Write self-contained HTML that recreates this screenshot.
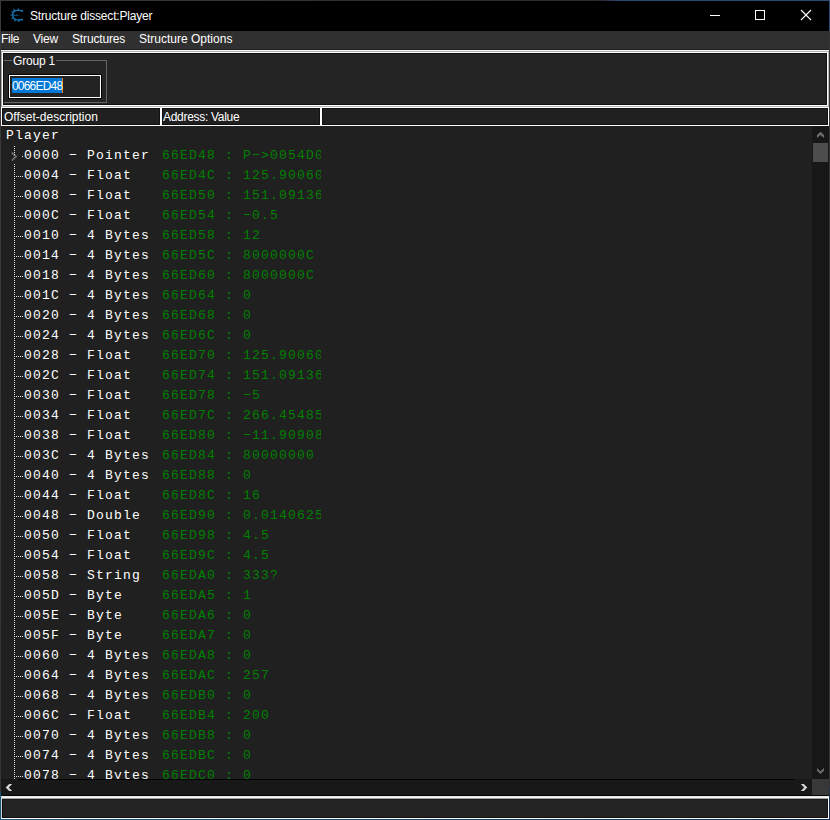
<!DOCTYPE html>
<html><head><meta charset="utf-8">
<style>
html,body{margin:0;padding:0;}
body{width:830px;height:820px;overflow:hidden;position:relative;background:#202020;font-family:"Liberation Sans",sans-serif;}
div{position:absolute;box-sizing:border-box;}
.t{color:#fff;font-size:12px;white-space:nowrap;line-height:14px;}
.r{left:0;height:20px;width:811px;font-family:"Liberation Mono",monospace;font-size:13px;letter-spacing:1.2px;line-height:20px;white-space:nowrap;}
.r .d{position:absolute;left:24px;top:0;color:#fff;}
.r .v{position:absolute;left:162px;top:0;color:#008000;width:159px;overflow:hidden;}
.vdot{width:1px;background:repeating-linear-gradient(to bottom,#e0e0e0 0 1px,transparent 1px 2px);}
.hdot{height:1px;background:repeating-linear-gradient(to right,#e0e0e0 0 1px,transparent 1px 2px);}
</style></head><body>
<!-- window border -->
<div style="left:0;top:0;width:830px;height:1px;background:linear-gradient(to right,#3a3a3a 0,#2a2a30 600px,#2c4a78 620px,#2c4a78 100%)"></div>
<div style="left:0;top:0;width:1px;height:820px;background:linear-gradient(to bottom,#3a3a3a 0,#363636 790px,#1a5a78 795px,#1a5a78 100%)"></div>
<div style="left:829px;top:0;width:1px;height:820px;background:linear-gradient(to bottom,#2c4a78 0,#2c4a78 30px,#363636 31px,#363636 780px,#10305a 800px)"></div>
<div style="left:0;top:819px;width:830px;height:1px;background:linear-gradient(to right,#1a5a78,#0c2c58)"></div>
<!-- title bar -->
<div style="left:1px;top:1px;width:828px;height:30px;background:#000"></div>
<svg style="position:absolute;left:6px;top:4px" width="24" height="24" viewBox="6 4 24 24">
  <path d="M22.5 11.2 Q19 9.8 15.5 10.6 Q12.6 12 12.6 15 Q12.8 18.2 15.5 19.6 Q19 20.6 22.5 19.2" fill="none" stroke="#1774ae" stroke-width="1.3"/>
  <path d="M10.3 15.2 H18.5" stroke="#1670a8" stroke-width="0.9"/>
  <path d="M13.6 8 L15.6 10.8 L13.6 11.4 Z M18.3 7.8 L19.6 10.6 L17.2 10.6 Z M22.6 9.2 L22.8 12.2 L20.6 11.2 Z M10.6 11.2 L13.4 11.6 L12.8 13 Z M10.6 18.8 L13 17.2 L13.6 18.8 Z M14.6 22 L14.6 19 L16.4 19.8 Z M18.8 22.2 L17.6 20.4 L20.2 20.4 Z M23.2 21.2 L20.8 19.6 L22.6 18.8 Z" fill="#1774ae"/>
</svg>
<div class="t" style="left:30px;top:9px;letter-spacing:-0.18px">Structure dissect:Player</div>
<div style="left:710px;top:15px;width:10px;height:1px;background:#fff"></div>
<div style="left:755px;top:10px;width:10px;height:10px;border:1px solid #fff"></div>
<svg style="position:absolute;left:800px;top:9px" width="12" height="12" viewBox="0 0 12 12">
  <path d="M1 1 L11 11 M11 1 L1 11" stroke="#fff" stroke-width="1.1"/>
</svg>
<!-- menu -->
<div style="left:1px;top:31px;width:828px;height:18px;background:#303030"></div>
<div class="t" style="left:1px;top:32px;letter-spacing:-0.3px">File</div>
<div class="t" style="left:33px;top:32px;letter-spacing:-0.2px">View</div>
<div class="t" style="left:72px;top:32px;letter-spacing:-0.15px">Structures</div>
<div class="t" style="left:139px;top:32px;">Structure Options</div>
<div style="left:1px;top:49px;width:828px;height:1px;background:#1f1f1f"></div>
<!-- upper panel -->
<div style="left:1px;top:50px;width:828px;height:57px;background:#242424"></div>
<div style="left:1px;top:50px;width:828px;height:1px;background:#f0f0f0"></div>
<div style="left:1px;top:51px;width:828px;height:1px;background:#b4b4b8"></div>
<div style="left:1px;top:51px;width:1px;height:56px;background:#a8a8ae"></div>
<div style="left:828px;top:51px;width:1px;height:56px;background:#b4b4b8"></div>
<div style="left:1px;top:106px;width:828px;height:1px;background:#b4b4b8"></div>
<div style="left:2px;top:52px;width:826px;height:54px;border:1px solid #fff"></div>
<div style="left:3px;top:53px;width:824px;height:52px;border:1px solid #111"></div>
<!-- group box -->
<div style="left:3px;top:60px;width:104px;height:43px;border:1px solid #646464;border-left-color:#111"></div>
<div style="left:12px;top:56px;width:44px;height:10px;background:#242424"></div>
<div class="t" style="left:13px;top:54px;letter-spacing:-0.2px">Group 1</div>
<div style="left:8px;top:74px;width:94px;height:25px;border:1px solid #000;background:#232323"></div>
<div style="left:9px;top:75px;width:92px;height:23px;border:1px solid #fff"></div>
<div style="left:12px;top:78px;width:50px;height:15px;background:#0078d7"></div>
<div style="left:62px;top:78px;width:1px;height:15px;background:#f08020"></div>
<div class="t" style="left:12px;top:79px;letter-spacing:-0.8px">0066ED48</div>
<!-- header -->
<div style="left:1px;top:107px;width:828px;height:19px;background:#202020;border:1px solid #fff"></div>
<div style="left:2px;top:108px;width:826px;height:17px;border:1px solid #111"></div>
<div style="left:159px;top:108px;width:4px;height:17px;background:#111"></div>
<div style="left:160px;top:107px;width:2px;height:18px;background:#fff"></div>
<div style="left:319px;top:108px;width:4px;height:17px;background:#111"></div>
<div style="left:320px;top:107px;width:2px;height:18px;background:#fff"></div>
<div class="t" style="left:4px;top:110px;">Offset-description</div>
<div class="t" style="left:163px;top:110px;letter-spacing:-0.3px">Address: Value</div>
<!-- tree -->
<div style="left:1px;top:126px;width:811px;height:653px;background:#202020;overflow:hidden">
</div>
<div class="r" style="top:126px"><span class="d" style="left:6px">Player</span></div>
<div class="r" style="top:146px"><span class="d">0000 − Pointer</span><span class="v">66ED48 : P−&gt;0054D0</span></div><div class="r" style="top:166px"><span class="d">0004 − Float</span><span class="v">66ED4C : 125.90060</span></div><div class="r" style="top:186px"><span class="d">0008 − Float</span><span class="v">66ED50 : 151.09136</span></div><div class="r" style="top:206px"><span class="d">000C − Float</span><span class="v">66ED54 : −0.5</span></div><div class="r" style="top:226px"><span class="d">0010 − 4 Bytes</span><span class="v">66ED58 : 12</span></div><div class="r" style="top:246px"><span class="d">0014 − 4 Bytes</span><span class="v">66ED5C : 8000000C</span></div><div class="r" style="top:266px"><span class="d">0018 − 4 Bytes</span><span class="v">66ED60 : 8000000C</span></div><div class="r" style="top:286px"><span class="d">001C − 4 Bytes</span><span class="v">66ED64 : 0</span></div><div class="r" style="top:306px"><span class="d">0020 − 4 Bytes</span><span class="v">66ED68 : 0</span></div><div class="r" style="top:326px"><span class="d">0024 − 4 Bytes</span><span class="v">66ED6C : 0</span></div><div class="r" style="top:346px"><span class="d">0028 − Float</span><span class="v">66ED70 : 125.90060</span></div><div class="r" style="top:366px"><span class="d">002C − Float</span><span class="v">66ED74 : 151.09136</span></div><div class="r" style="top:386px"><span class="d">0030 − Float</span><span class="v">66ED78 : −5</span></div><div class="r" style="top:406px"><span class="d">0034 − Float</span><span class="v">66ED7C : 266.45485</span></div><div class="r" style="top:426px"><span class="d">0038 − Float</span><span class="v">66ED80 : −11.90908</span></div><div class="r" style="top:446px"><span class="d">003C − 4 Bytes</span><span class="v">66ED84 : 80000000</span></div><div class="r" style="top:466px"><span class="d">0040 − 4 Bytes</span><span class="v">66ED88 : 0</span></div><div class="r" style="top:486px"><span class="d">0044 − Float</span><span class="v">66ED8C : 16</span></div><div class="r" style="top:506px"><span class="d">0048 − Double</span><span class="v">66ED90 : 0.0140625</span></div><div class="r" style="top:526px"><span class="d">0050 − Float</span><span class="v">66ED98 : 4.5</span></div><div class="r" style="top:546px"><span class="d">0054 − Float</span><span class="v">66ED9C : 4.5</span></div><div class="r" style="top:566px"><span class="d">0058 − String</span><span class="v">66EDA0 : 333?</span></div><div class="r" style="top:586px"><span class="d">005D − Byte</span><span class="v">66EDA5 : 1</span></div><div class="r" style="top:606px"><span class="d">005E − Byte</span><span class="v">66EDA6 : 0</span></div><div class="r" style="top:626px"><span class="d">005F − Byte</span><span class="v">66EDA7 : 0</span></div><div class="r" style="top:646px"><span class="d">0060 − 4 Bytes</span><span class="v">66EDA8 : 0</span></div><div class="r" style="top:666px"><span class="d">0064 − 4 Bytes</span><span class="v">66EDAC : 257</span></div><div class="r" style="top:686px"><span class="d">0068 − 4 Bytes</span><span class="v">66EDB0 : 0</span></div><div class="r" style="top:706px"><span class="d">006C − Float</span><span class="v">66EDB4 : 200</span></div><div class="r" style="top:726px"><span class="d">0070 − 4 Bytes</span><span class="v">66EDB8 : 0</span></div><div class="r" style="top:746px"><span class="d">0074 − 4 Bytes</span><span class="v">66EDBC : 0</span></div><div class="r" style="top:766px"><span class="d">0078 − 4 Bytes</span><span class="v">66EDC0 : 0</span></div>
<svg style="position:absolute;left:0;top:140px" width="30" height="30" viewBox="0 140 30 30">
  <path d="M11.8 152.6 L16 156.6 L11.8 160.6" fill="none" stroke="#6b6b6b" stroke-width="1.9"/>
</svg>
<div class="vdot" style="left:14px;top:146px;height:9px"></div><div class="vdot" style="left:14px;top:164px;height:615px"></div><div class="hdot" style="left:22px;top:156px;width:2px"></div><div class="hdot" style="left:16px;top:176px;width:8px"></div><div class="hdot" style="left:16px;top:196px;width:8px"></div><div class="hdot" style="left:16px;top:216px;width:8px"></div><div class="hdot" style="left:16px;top:236px;width:8px"></div><div class="hdot" style="left:16px;top:256px;width:8px"></div><div class="hdot" style="left:16px;top:276px;width:8px"></div><div class="hdot" style="left:16px;top:296px;width:8px"></div><div class="hdot" style="left:16px;top:316px;width:8px"></div><div class="hdot" style="left:16px;top:336px;width:8px"></div><div class="hdot" style="left:16px;top:356px;width:8px"></div><div class="hdot" style="left:16px;top:376px;width:8px"></div><div class="hdot" style="left:16px;top:396px;width:8px"></div><div class="hdot" style="left:16px;top:416px;width:8px"></div><div class="hdot" style="left:16px;top:436px;width:8px"></div><div class="hdot" style="left:16px;top:456px;width:8px"></div><div class="hdot" style="left:16px;top:476px;width:8px"></div><div class="hdot" style="left:16px;top:496px;width:8px"></div><div class="hdot" style="left:16px;top:516px;width:8px"></div><div class="hdot" style="left:16px;top:536px;width:8px"></div><div class="hdot" style="left:16px;top:556px;width:8px"></div><div class="hdot" style="left:16px;top:576px;width:8px"></div><div class="hdot" style="left:16px;top:596px;width:8px"></div><div class="hdot" style="left:16px;top:616px;width:8px"></div><div class="hdot" style="left:16px;top:636px;width:8px"></div><div class="hdot" style="left:16px;top:656px;width:8px"></div><div class="hdot" style="left:16px;top:676px;width:8px"></div><div class="hdot" style="left:16px;top:696px;width:8px"></div><div class="hdot" style="left:16px;top:716px;width:8px"></div><div class="hdot" style="left:16px;top:736px;width:8px"></div><div class="hdot" style="left:16px;top:756px;width:8px"></div><div class="hdot" style="left:16px;top:776px;width:8px"></div>
<!-- vertical scrollbar -->
<div style="left:812px;top:126px;width:17px;height:653px;background:#171717"></div>

<div style="left:813px;top:143px;width:15px;height:19px;background:#4d4d4d"></div>

<!-- horizontal scrollbar -->
<div style="left:1px;top:779px;width:811px;height:17px;background:#181818"></div>
<div style="left:18px;top:779px;width:777px;height:1px;background:#000"></div>
<div style="left:1px;top:795px;width:828px;height:1px;background:#070707"></div>


<div style="left:812px;top:779px;width:17px;height:16px;background:#383838"></div>
<svg style="position:absolute;left:0;top:0" width="830" height="820" viewBox="0 0 830 820">
  <polygon points="817,135.1 820.5,131.8 824,135.1 824,138 820.5,134.9 817,138" fill="#6e6e6e"/>
  <polygon points="817,768 820.5,771.2 824,768 824,770.8 820.5,774 817,770.8" fill="#6e6e6e"/>
  <polygon points="9.1,783.9 12.2,783.9 8.8,787.5 12.2,791 9.1,791 5.6,787.5" fill="#d4d4d4"/>
  <polygon points="800.8,784 803.9,784 807.3,787.5 803.9,791 800.8,791 804.2,787.5" fill="#d4d4d4"/>
</svg>
<!-- status bar -->
<div style="left:1px;top:796px;width:828px;height:23px;background:#242424"></div>
<div style="left:1px;top:796px;width:828px;height:1px;background:#e8e8e8"></div>
<div style="left:1px;top:797px;width:828px;height:1px;background:#f5f5f5"></div>
<div style="left:1px;top:798px;width:828px;height:1px;background:#a0a0a4"></div>
<div style="left:1px;top:797px;width:1px;height:22px;background:#d0d0d0"></div>
<div style="left:828px;top:797px;width:1px;height:22px;background:#fff"></div>
<div style="left:1px;top:818px;width:828px;height:1px;background:#fff"></div>
<div style="left:2px;top:799px;width:826px;height:19px;border:1px solid #111;border-top-color:#191919"></div>
</body></html>
